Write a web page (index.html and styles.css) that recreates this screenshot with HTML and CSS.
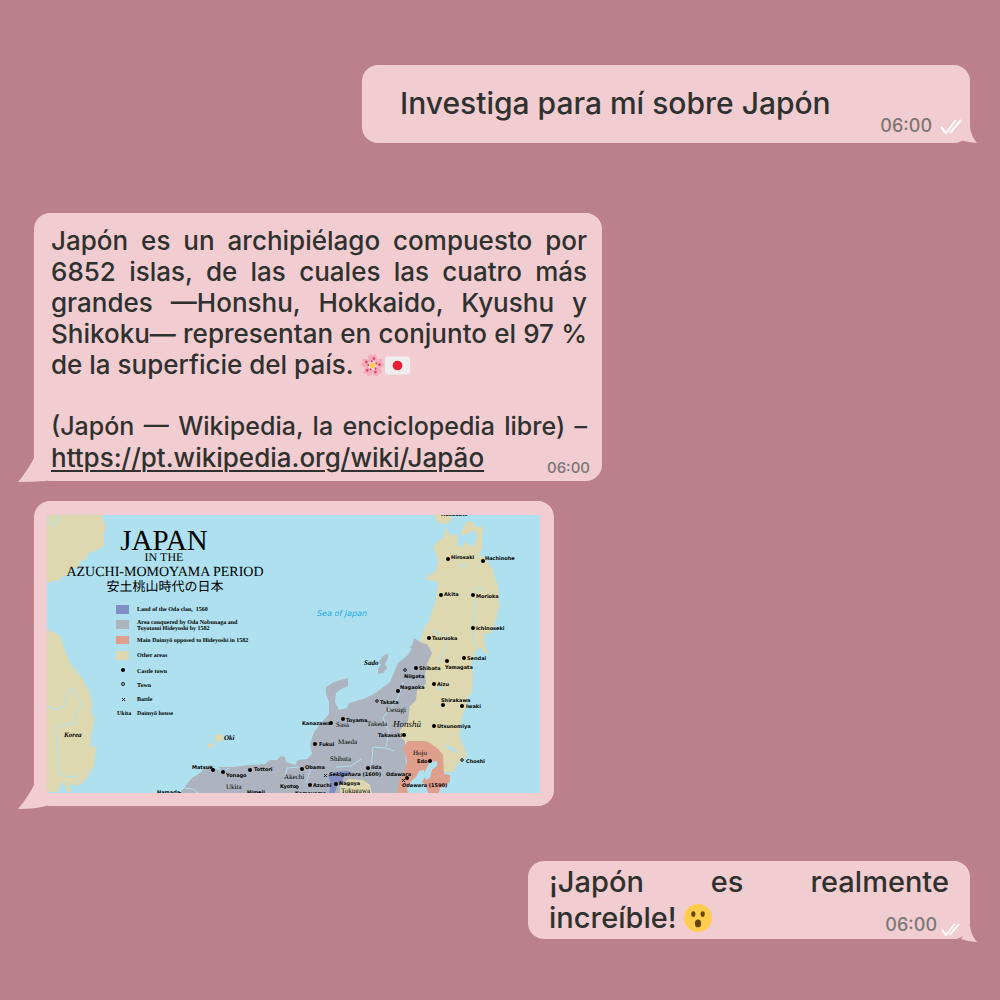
FILE: index.html
```html
<!DOCTYPE html>
<html lang="es">
<head>
<meta charset="utf-8">
<meta name="viewport" content="width=device-width, initial-scale=1">
<title>Chat sobre Japón</title>
<link rel="stylesheet" href="styles.css">
</head>
<body>
<main class="chat">
  <article class="bubble sent question">
    <p class="text large">Investiga para mí sobre Japón</p>
    <div class="meta">
      <time>06:00</time>
      <svg class="ticks" viewBox="0 0 22 16" aria-hidden="true"><path d="M1 9l5 6L16 2M10 15L21 2"/></svg>
    </div>
  </article>

  <article class="bubble received answer">
    <p class="text">Japón es un archipiélago compuesto por 6852 islas, de las cuales las cuatro más grandes —Honshu, Hokkaido, Kyushu y Shikoku— representan en conjunto el 97&nbsp;% de la superficie del país. <svg class="emoji" viewBox="0 0 36 36" role="img" aria-label="Flor de cerezo">
        <g fill="#f4abba">
          <path id="petal" d="M18 18C10 13 10 4 15 1l3 3 3-3c5 3 5 12-3 17z"/>
          <use href="#petal" transform="rotate(72 18 18)"/><use href="#petal" transform="rotate(144 18 18)"/><use href="#petal" transform="rotate(216 18 18)"/><use href="#petal" transform="rotate(288 18 18)"/>
        </g>
        <circle cx="18" cy="18" r="6" fill="#fbe3e6"/>
        <g fill="#dd4668">
          <g id="stamen"><circle cx="20" cy="8" r="2"/><circle cx="17" cy="12" r="1.5"/></g>
          <use href="#stamen" transform="rotate(72 18 18)"/><use href="#stamen" transform="rotate(144 18 18)"/><use href="#stamen" transform="rotate(216 18 18)"/><use href="#stamen" transform="rotate(288 18 18)"/>
        </g>
        <circle cx="18" cy="18" r="4" fill="#ffcc4d"/>
      </svg><svg class="emoji" viewBox="0 0 36 36" role="img" aria-label="Bandera de Japón"><rect y="5" width="36" height="26" rx="4" fill="#eee"/><circle cx="18" cy="18" r="7" fill="#ed1b2f"/></svg></p>
    <p class="text source">(Japón — Wikipedia, la enciclopedia libre) – <a href="https://pt.wikipedia.org/wiki/Japão">https://pt.wikipedia.org/wiki/Japão</a></p>
    <time class="corner small">06:00</time>
  </article>

  <article class="bubble received picture">
    <svg class="map" viewBox="47 514 493 278" role="img" aria-label="Mapa de Japón en el período Azuchi-Momoyama">
      <rect x="47" y="514" width="493" height="278" fill="#aee0ef"/>
      <g fill="#ded8b0">
        <path d="M47 514h55l1 5 3 6-2 9v11l-5 3-10 4-3 6-5 2-3 6-6 2-4 6-6 2-3 4-4-1-3 3-8-2z"/>
        <path d="M47 628l6 3 7 4 3 8 2 7 5 12 6 8 6 7 4 8 4 7 2 12-1 7 4 7-2 6-2 9v12l3 1 3-1-2 9-1 11-3 4-4 8-4 5-7 3-6-3 1 9h-4l-3-10-3 2-3 8H47z"/>
        <path d="M435 514h16v6l-4 3-8-1-3-3z"/>
        <path d="M448 531l4 4 5-3 1 13 5 1 2-5 8 5 4-9-1-7-8 2-7 3 1-6 5-9 5 1 6 6 6-2-2 8v23l4 2 7 11 2 8 3 8 1 9-1 8 2 3-3 7v5l-2 3v6l-4 2 1 5-7-1-1 8 4 14-5-3-1-4-6 2-2 7-2 6 1 13-1 17-4 4-3 14-3 6-3 19 6 13 2 7-6 5-5 5-2 6h-10l-42-20-5-20 5-40 23-65 4-6 6-18 3-18-1-4-5 0-6-2 3-4 6-3 3-8-2-12-3-4 3-5 7-5 3-11z"/>
        <circle cx="219" cy="737" r="4"/><path d="M208 744l4-3 2 3-2 3-4-1zM138 684h4v2h-3zM415 519h2v1h-2zM421 615h2v1h-2z"/>
      </g>
      <g fill="#adb4bf">
        <path d="M422 642l5 1 5 9-5 11-2 10 1 9-5 6-4 1-1 10-6 6-2 15-8 9v7l5 4 2 52H180l12-15 8-5 5-6 5-2 8 2h15l17-2 15-1 5-4h7l4-4 4 1 1 5 9 3 3-5 9-1 5-5-2-10 4-12 8-10 7-8v-12l-3-8v-7l8-5 14-4v8l-7 3-5 4-1 9 4 8 8-2 2-5 17-5 11-6 13-10 8-19 9-7 4-6 3-12z"/>
        <path d="M388 652l-6 4-3 5 2 3-3 4v5l5-1 4-5-2-4 3-6zM412 644l1 2-2 2-1-2z"/>
      </g>
      <path fill="#808ec4" d="M328 774l6-3 13-1 5 2-8 3-3 8-4 2-2 7h-6l2-9z"/>
      <path fill="#ded8b0" d="M340 785l9-7 14 1 7 5 2 8h-32z"/>
      <path fill="#df9f8d" d="M403 747l5-7h17l5 2 8 6 5 6 1 19 6 1v6l-5 6-5 1-1 5h-11l-2-7-4-4 3-5-1-7-5 1-3 6-5 4-4 8 1 4h-11l3-14 5-7 2-11-2-8z"/>
      <path fill="#aee0ef" d="M426 768l4-7 7-1v5l-5 4-2 8-4 2-2-6zM484 547l-4 3-1 6 2-1zM461 564l5-1v2l-4 1zM437 687l5-2v3l-4 1zM444 743l8 3 8 7-10-4zM205 766l12-1 6 5-10-3z"/>
      <g fill="none" stroke="#aee0ef" stroke-width="1">
        <path d="M48 515v6l4 4 5-3V514M47 706l11 2 6-3 2-10 5-8 5 3 1 5 6 9-7 8-1 10-16 3-4 6 2 6 1 35 9 4 8-1 5 4v6l-5 6"/>
        <path d="M432 630l16 6-3 12-7 14M475 586l9 3M475 588l-2 50 4 10M403 681l-5 16-15 20 6 14-3 15M386 747l-13-1-2 22M386 747l8 3M361 758l-10 7-15 1M178 786l15 2 5 4M230 767l-10 4M285 776l2-9 12-1M311 767l-5 15"/>
      </g>
      <g class="legend-swatches">
        <rect x="116" y="604" width="13" height="9" fill="#808ec4"/>
        <rect x="116" y="619" width="13" height="9" fill="#adb4bf"/>
        <rect x="116" y="635" width="13" height="8" fill="#df9f8d"/>
        <rect x="116" y="650" width="13" height="9" fill="#ded8b0"/>
      </g>
      <g class="map-title">
        <text x="164" y="549" class="title-xl">JAPAN</text>
        <text x="164" y="560" class="title-s">IN THE</text>
        <text x="165" y="575" class="title-m">AZUCHI-MOMOYAMA PERIOD</text>
        <text x="165" y="590" class="title-jp">安土桃山時代の日本</text>
      </g>
      <g class="legend">
        <text x="137" y="610">Land of the Oda clan,&#160; 1560</text>
        <text x="137" y="623">Area conquered by Oda Nobunaga and</text>
        <text x="137" y="629">Toyotomi Hideyoshi by 1582</text>
        <text x="137" y="641">Main Daimyō opposed to Hideyoshi in 1582</text>
        <text x="137" y="656">Other areas</text>
        <text x="137" y="672">Castle town</text>
        <text x="137" y="686">Town</text>
        <text x="137" y="700">Battle</text>
        <text x="117" y="714">Ukita</text>
        <text x="137" y="714">Daimyō house</text>
      </g>
      <g class="houses">
        <text x="386" y="711">Uesugi</text>
        <text x="367" y="725">Takeda</text>
        <text x="336" y="726">Sasa</text>
        <text x="338" y="743">Maeda</text>
        <text x="330" y="760">Shibata</text>
        <text x="284" y="778">Akechi</text>
        <text x="226" y="788">Ukita</text>
        <text x="413" y="754">Hojo</text>
        <text x="341" y="792">Tokugawa</text>
      </g>
      <g class="islands">
        <text x="64" y="736">Korea</text><text x="224" y="739">Oki</text><text x="364" y="664">Sado</text>
        <text x="393" y="726" class="honshu">Honshū</text>
      </g>
      <text x="317" y="615" class="sea">Sea of Japan</text>
      <g class="cities">
        <text x="441" y="515">Hakodate</text>
        <text x="451" y="558">Hirosaki</text><text x="485" y="559">Hachinohe</text>
        <text x="444" y="595">Akita</text><text x="476" y="597">Morioka</text>
        <text x="476" y="629">Ichinoseki</text><text x="432" y="639">Tsuruoka</text>
        <text x="467" y="659">Sendai</text><text x="445" y="668">Yamagata</text>
        <text x="419" y="669">Shibata</text><text x="404" y="677">Niigata</text>
        <text x="400" y="688">Nagaoka</text><text x="437" y="685">Aizu</text>
        <text x="380" y="703">Takata</text><text x="441" y="701">Shirakawa</text>
        <text x="466" y="707">Iwaki</text><text x="437" y="727">Utsunomiya</text>
        <text x="346" y="721">Toyama</text><text x="302" y="724">Kanazawa</text>
        <text x="378" y="736">Takasaki</text><text x="319" y="745">Fukui</text>
        <text x="417" y="762">Edo</text><text x="466" y="762">Choshi</text>
        <text x="305" y="768">Obama</text><text x="371" y="768">Iida</text>
        <text x="329" y="775"><tspan class="battle">Sekigahara</tspan> (1600)</text>
        <text x="386" y="775">Odawara</text><text x="402" y="786"><tspan class="battle">Odawara</tspan> (1590)</text>
        <text x="313" y="786">Azuchi</text><text x="339" y="784">Nagoya</text>
        <text x="280" y="787">Kyoto</text><text x="295" y="794">Kameyama</text>
        <text x="192" y="768">Matsue</text><text x="226" y="776">Yonago</text>
        <text x="254" y="770">Tottori</text><text x="247" y="793">Himeji</text><text x="157" y="793">Hamada</text>
      </g>
      <g class="dots">
        <circle cx="123" cy="669" r="2"/><circle cx="448" cy="558" r="2"/><circle cx="483" cy="560" r="2"/><circle cx="441" cy="594" r="2"/><circle cx="473" cy="594" r="2"/><circle cx="473" cy="627" r="2"/><circle cx="429" cy="637" r="2"/><circle cx="464" cy="657" r="2"/><circle cx="447" cy="660" r="2"/><circle cx="416" cy="667" r="2"/><circle cx="398" cy="690" r="2"/><circle cx="434" cy="683" r="2"/><circle cx="443" cy="704" r="2"/><circle cx="462" cy="705" r="2"/><circle cx="434" cy="725" r="2"/><circle cx="343" cy="718" r="2"/><circle cx="331" cy="722" r="2"/><circle cx="404" cy="734" r="2"/><circle cx="315" cy="743" r="2"/><circle cx="430" cy="760" r="2"/><circle cx="302" cy="768" r="2"/><circle cx="368" cy="767" r="2"/><circle cx="407" cy="777" r="2"/><circle cx="310" cy="784" r="2"/><circle cx="336" cy="783" r="2"/><circle cx="213" cy="769" r="2"/><circle cx="223" cy="771" r="2"/><circle cx="250" cy="769" r="2"/><circle cx="180" cy="792" r="1"/>
      </g>
      <g class="towns">
        <circle cx="123" cy="683" r="1.5"/><circle cx="405" cy="669" r="1.3"/><circle cx="377" cy="700" r="1.3"/><circle cx="462" cy="759" r="1.3"/><circle cx="297" cy="786" r="1.3"/>
        <path d="M122 697l3 3m0-3l-3 3M324 773l3 3m0-3l-3 3M402 778l3 3m0-3l-3 3"/>
      </g>
    </svg>
  </article>

  <article class="bubble sent reply">
    <p class="text large">¡Japón es realmente increíble! <svg class="emoji face" viewBox="0 0 36 36" role="img" aria-label="Cara de asombro"><circle cx="18" cy="18" r="18" fill="#ffcc4d"/><g fill="#664500"><ellipse cx="12" cy="13" rx="2.7" ry="3.6"/><ellipse cx="24" cy="13" rx="2.7" ry="3.6"/><ellipse cx="18" cy="25" rx="4" ry="5"/></g></svg></p>
    <div class="meta corner">
      <time>06:00</time>
      <svg class="ticks" viewBox="0 0 22 16" aria-hidden="true"><path d="M1 9l5 6L16 2M10 15L21 2"/></svg>
    </div>
  </article>
</main>
</body>
</html>
```
FILE: styles.css
```css
* {
  box-sizing: border-box;
}

body {
  margin: 0;
  min-height: 100vh;
  background: #bc808b;
  color: #2f312f;
  font-family: Inter, "Open Sans", sans-serif;
  font-weight: 500;
}

.chat {
  display: flex;
  flex-direction: column;
  padding: 65px 30px 60px 34px;
}

.bubble {
  position: relative;
  width: 100%;
  border-radius: 16px;
  background: #f1ccd0;
}

.bubble::after {
  content: "";
  position: absolute;
  bottom: -1px;
  width: 28px;
  height: 24px;
  background: #f1ccd0;
}

.sent {
  align-self: flex-end;
}

.sent::after {
  right: -7px;
  bottom: 0;
  width: 20px;
  height: 16px;
  clip-path: path("M13 0Q14 9 20 16Q12 16 4 13Z");
}

.received::after {
  left: -16px;
  clip-path: path("M16 0Q10 12 0 24Q14 24 28 23L28 10Z");
}

.question {
  display: flex;
  align-items: center;
  justify-content: space-between;
  max-width: 608px;
  min-height: 78px;
  padding: 0 8px 2px 38px;
}

.question .text {
  font-size: 30px;
}

.question .meta {
  align-self: flex-end;
  padding-bottom: 4px;
}

.answer {
  max-width: 568px;
  margin-top: 70px;
  padding: 12px 15px 7px 17px;
}

.picture {
  max-width: 520px;
  margin-top: 20px;
  padding: 14px 14px 13px 13px;
}

.picture::after {
  bottom: -3px;
  clip-path: path("M16 0Q10 12 0 24Q18 24 28 21L28 10Z");
}

.reply {
  max-width: 442px;
  margin-top: 55px;
  padding: 3px 21px;
}

.reply::after {
  bottom: -3px;
}

.text {
  margin: 0;
  font-size: 26px;
  line-height: 31px;
  text-align: justify;
}

.source {
  margin-top: 31px;
  font-size: 25px;
}

.large {
  font-size: 29px;
  line-height: 36px;
}

a {
  color: inherit;
  font-size: 26px;
  text-decoration-thickness: 2px;
  text-underline-offset: 3px;
}

.emoji {
  width: 25px;
  height: 25px;
  vertical-align: -4px;
}

.face {
  width: 28px;
  height: 28px;
}

.meta {
  display: flex;
  align-items: center;
  gap: 8px;
}

time {
  color: #7c7676;
  font-size: 18px;
  line-height: 22px;
}

.small {
  font-size: 15px;
  line-height: 18px;
}

.corner {
  position: absolute;
  right: 12px;
  bottom: 4px;
}

.reply .corner {
  align-items: flex-end;
  right: 10px;
  bottom: 3px;
  gap: 4px;
}

.ticks {
  width: 22px;
  height: 16px;
  fill: none;
  stroke: #fff;
  stroke-width: 2;
}

.reply .ticks {
  width: 19px;
  height: 14px;
}

.map {
  display: block;
  width: 100%;
  height: auto;
  text-rendering: geometricPrecision;
}

.map-title {
  font-family: "Liberation Serif", serif;
  font-weight: 400;
  text-anchor: middle;
}

.title-xl {
  font-size: 29px;
}

.title-s {
  font-size: 12px;
}

.title-m {
  font-size: 14px;
}

.title-jp {
  font-family: "Noto Sans CJK JP", sans-serif;
  font-size: 13px;
}

.legend {
  font: bold 6px "Liberation Serif", serif;
}

.houses {
  font: 7px "Liberation Serif", serif;
}

.islands {
  font: italic bold 7px "Liberation Serif", serif;
}

.honshu {
  font-size: 9px;
  font-weight: 400;
}

.sea {
  fill: #18a8e8;
  font: italic 8px "DejaVu Sans", sans-serif;
}

.cities {
  font: bold 5px "DejaVu Sans", sans-serif;
}

.battle {
  font-style: italic;
}

.towns {
  fill: none;
  stroke: #111;
  stroke-width: 1;
}
```
